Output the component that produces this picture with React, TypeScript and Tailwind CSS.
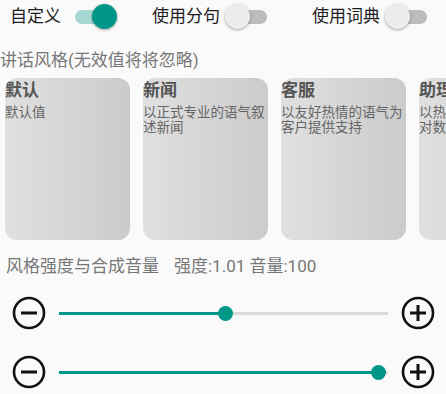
import React from "react";

const font = { fontFamily: "Roboto, 'Noto Sans CJK SC', sans-serif" };

function Switch({ on }: { on: boolean }) {
  return (
    <div className="relative w-[42px] h-[26px] shrink-0">
      <div
        className={
          on
            ? "absolute left-0 top-[6px] w-[35px] h-[14px] rounded-full bg-[#a7d9d4]"
            : "absolute left-[7px] top-[6px] w-[35px] h-[14px] rounded-full bg-[#bcbcbc]"
        }
      />
      <div
        className={
          on
            ? "absolute left-[17px] top-0 w-[25px] h-[25px] rounded-full bg-[#009688] shadow-[0_1px_3px_rgba(0,0,0,0.35)]"
            : "absolute left-0 top-0 w-[25px] h-[25px] rounded-full bg-[#ececec] shadow-[0_1px_3px_rgba(0,0,0,0.35)]"
        }
      />
    </div>
  );
}

function Minus() {
  return (
    <svg width="34" height="34" viewBox="0 0 34 34" className="shrink-0">
      <circle cx="17" cy="17" r="15" fill="none" stroke="#111" strokeWidth="2.6" />
      <line x1="9" y1="17" x2="25" y2="17" stroke="#111" strokeWidth="3" />
    </svg>
  );
}

function Plus() {
  return (
    <svg width="34" height="34" viewBox="0 0 34 34" className="shrink-0">
      <circle cx="17" cy="17" r="15" fill="none" stroke="#111" strokeWidth="2.6" />
      <line x1="9" y1="17" x2="25" y2="17" stroke="#111" strokeWidth="3" />
      <line x1="17" y1="9" x2="17" y2="25" stroke="#111" strokeWidth="3" />
    </svg>
  );
}

function Slider({ pct }: { pct: number }) {
  return (
    <div className="flex items-center pl-[12px] h-[44px]">
      <Minus />
      <div className="relative ml-[13px] w-[329px] h-[16px] flex items-center">
        <div className="w-full h-[3px] bg-[#d9d9d9] relative">
          <div className="absolute left-0 top-0 h-[3px] bg-[#009688]" style={{ width: `${pct}%` }} />
        </div>
        <div
          className="absolute top-[0.5px] w-[15px] h-[15px] -ml-[7.5px] rounded-full bg-[#009688]"
          style={{ left: `${pct}%` }}
        />
      </div>
      <div className="ml-[13px]">
        <Plus />
      </div>
    </div>
  );
}

const cards = [
  { t: "默认", d: "默认值" },
  { t: "新闻", d: "以正式专业的语气叙述新闻" },
  { t: "客服", d: "以友好热情的语气为客户提供支持" },
  { t: "助理", d: "以热情积极的语气应对数据问题" },
];

export default function App() {
  return (
    <div className="w-[446px] h-[394px] bg-[#fafafa] overflow-hidden" style={font}>
      <div className="flex items-center h-[34px] pl-[10px] text-[17px] text-[#1c1c1c]">
        <span className="w-[51px] whitespace-nowrap">自定义</span>
        <div className="ml-[14px]">
          <Switch on />
        </div>
        <span className="ml-[35px] w-[68px] whitespace-nowrap">使用分句</span>
        <div className="ml-[5px]">
          <Switch on={false} />
        </div>
        <span className="ml-[45px] w-[68px] whitespace-nowrap">使用词典</span>
        <div className="ml-[5px]">
          <Switch on={false} />
        </div>
      </div>
      <div className="mt-[16px] text-[17px] leading-[20px] text-[#777] whitespace-nowrap">
        讲话风格(无效值将将忽略)
      </div>
      <div className="mt-[8px] flex gap-[13px] pl-[5px] overflow-hidden">
        {cards.map((c) => (
          <div
            key={c.t}
            className="w-[125px] h-[162px] shrink-0 rounded-[12px] bg-gradient-to-r from-[#e0e0e0] to-[#cbcbcb] overflow-hidden pt-[1px]"
          >
            <div className="text-[17px] leading-[22px] font-bold text-[#555] whitespace-nowrap">{c.t}</div>
            <div className="mt-[4px] text-[13.5px] leading-[15px] text-[#666] break-all">{c.d}</div>
          </div>
        ))}
      </div>
      <div className="mt-[15px] pl-[6px] text-[17px] leading-[22px] text-[#777] whitespace-nowrap">
        风格强度与合成音量<span className="ml-[15px]">强度:1.01 音量:100</span>
      </div>
      <div className="mt-[14px]">
        <Slider pct={50.5} />
      </div>
      <div className="mt-[15px]">
        <Slider pct={97} />
      </div>
    </div>
  );
}
